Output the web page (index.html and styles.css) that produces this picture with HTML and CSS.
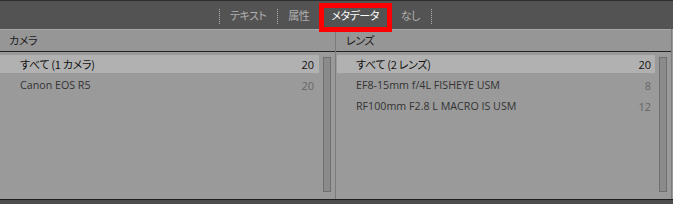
FILE: index.html
```html
<!DOCTYPE html>
<html lang="ja">
<head>
<meta charset="utf-8">
<title>メタデータ</title>
<link rel="stylesheet" href="styles.css">
</head>
<body>
<div class="app">
  <div class="topbar">
    <div class="tabs">
      <span class="sep"></span>
      <span class="tab">テキスト</span>
      <span class="sep"></span>
      <span class="tab">属性</span>
      <span class="sep"></span>
      <span class="tab active">メタデータ</span>
      <span class="sep"></span>
      <span class="tab">なし</span>
      <span class="sep"></span>
    </div>
  </div>
  <div class="columns">
    <div class="col col-left">
      <div class="col-head">カメラ</div>
      <div class="col-body">
        <div class="list">
          <div class="row selected"><span class="name ja">すべて (1 カメラ)</span><span class="count">20</span></div>
          <div class="row"><span class="name">Canon EOS R5</span><span class="count">20</span></div>
        </div>
        <div class="scroll"></div>
      </div>
    </div>
    <div class="col col-right">
      <div class="col-head">レンズ</div>
      <div class="col-body">
        <div class="list">
          <div class="row selected"><span class="name ja">すべて (2 レンズ)</span><span class="count">20</span></div>
          <div class="row"><span class="name">EF8-15mm f/4L FISHEYE USM</span><span class="count">8</span></div>
          <div class="row"><span class="name">RF100mm F2.8 L MACRO IS USM</span><span class="count">12</span></div>
        </div>
        <div class="scroll"></div>
      </div>
    </div>
  </div>
  <div class="bottombar"></div>
</div>
</body>
</html>
```
FILE: styles.css
```css
html, body {
  margin: 0;
  padding: 0;
}
body {
  background: #999999;
  font-family: "Open Sans", "Noto Sans CJK JP", sans-serif;
}
.app {
  width: 673px;
  height: 204px;
  display: flex;
  flex-direction: column;
  overflow: hidden;
}
.topbar {
  height: 28px;
  border-top: 1px solid #2e2e2e;
  background: #535353;
  display: flex;
  align-items: stretch;
  padding-left: 219px;
}
.tabs {
  display: flex;
  align-items: center;
}
.sep {
  width: 1px;
  height: 15px;
  margin-top: 2px;
  background: repeating-linear-gradient(to bottom, #b0b0b0 0 1px, transparent 1px 2px);
}
.tab {
  position: relative;
  padding: 0 11px 0 10px;
  font-family: "Noto Sans CJK JP", sans-serif;
  font-feature-settings: "palt";
  font-size: 11px;
  letter-spacing: -0.5px;
  line-height: 28px;
  color: #b0b0b0;
}
.tab.active {
  color: #ffffff;
}
.tab.active::after {
  content: "";
  position: absolute;
  left: -2px;
  right: -2px;
  top: 2px;
  height: 29px;
  border: 5px solid #ff0000;
  box-sizing: border-box;
}
.columns {
  flex: 1;
  display: flex;
}
.col {
  display: flex;
  flex-direction: column;
}
.col-left {
  width: 335px;
  border-right: 1px solid #7b7b7b;
}
.col-right {
  width: 335px;
  border-right: 1px solid #7b7b7b;
}
.col-head {
  height: 21px;
  border-top: 1px solid #a6a6a6;
  border-bottom: 1px solid #222222;
  background: #969696;
  font-family: "Noto Sans CJK JP", sans-serif;
  font-feature-settings: "palt";
  font-size: 11px;
  letter-spacing: -0.4px;
  line-height: 21px;
  color: #1c1c1c;
  padding-left: 9px;
}
.col-right .col-head {
  padding-left: 10px;
}
.col-body {
  flex: 1;
  display: flex;
  background: #9a9a9a;
}
.list {
  flex: 1;
  padding-top: 3px;
}
.col-right .list {
  padding-left: 1px;
}
.row {
  height: 18px;
  margin-bottom: 3px;
  display: flex;
  align-items: center;
  justify-content: space-between;
  padding: 0 5px 0 20px;
  font-size: 10.7px;
  color: #333333;
}
.col-right .row {
  padding-left: 19px;
  padding-right: 4px;
}
.name.ja {
  font-family: "Noto Sans CJK JP", sans-serif;
  font-feature-settings: "palt";
  font-size: 11px;
  letter-spacing: -0.3px;
}
.row.selected {
  background: #b1b1b1;
  color: #111111;
}
.count {
  font-size: 11px;
  color: #666666;
}
.row.selected .count {
  color: #111111;
}
.scroll {
  width: 6px;
  height: 133px;
  margin: 5px 4px 0 4px;
  border: 1px solid #6f6f6f;
  background: #8b8b8b;
}
.bottombar {
  height: 4px;
  border-top: 1px solid #1e1e1e;
  background: #4d4d4d;
}
```
